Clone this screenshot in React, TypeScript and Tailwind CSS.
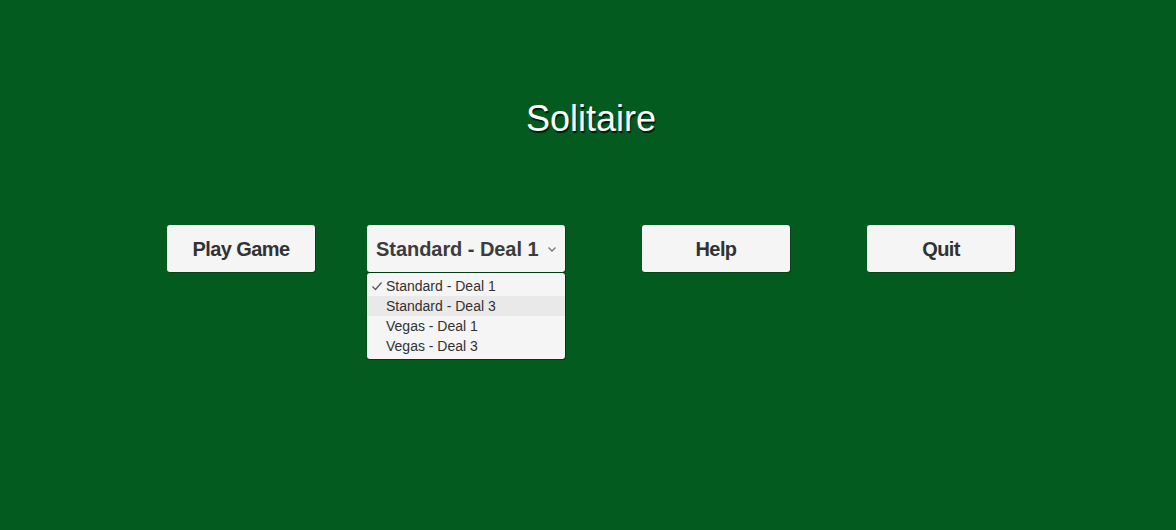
import { useState } from "react";

const modes = ["Standard - Deal 1", "Standard - Deal 3", "Vegas - Deal 1", "Vegas - Deal 3"];

function MenuButton({ label }: { label: string }) {
  return (
    <button className="flex h-[47px] w-[148px] items-center justify-center rounded-[3px] bg-[#f5f5f5] text-[20px] font-bold tracking-[-0.6px] text-[#323232] shadow-[1px_1px_0_rgba(0,0,0,0.25)]">
      {label}
    </button>
  );
}

function ModeDropdown() {
  const [selected] = useState(0);
  const hovered = 1;

  return (
    <div className="relative w-[198px]">
      <button className="flex h-[47px] w-full items-center rounded-[3px] bg-[#f5f5f5] pl-[9px] pr-[8px] text-[20px] font-bold tracking-[-0.05px] text-[#3c3c3c] shadow-[1px_1px_0_rgba(0,0,0,0.25)]">
        <span className="flex-1 text-left">{modes[selected]}</span>
        <svg className="h-[10px] w-[10px]" viewBox="0 0 10 10" fill="none" stroke="#777" strokeWidth={1.3}>
          <path d="M1.5 3.5L5 7l3.5-3.5" />
        </svg>
      </button>

      {/* open list */}
      <div className="absolute left-0 top-[48px] w-full rounded-[3px] bg-[#f5f5f5] pt-[3px] pb-[3px] shadow-[1px_1px_0_rgba(0,0,0,0.3),0_0_0_1px_rgba(0,0,0,0.12)]">
        {modes.map((m, i) => (
          <div
            key={m}
            className={`flex h-[20px] items-center text-[14px] text-[#323232] ${i === hovered ? "bg-[#e9e9e9]" : ""}`}
          >
            <span className="flex w-[19px] justify-center">
              {i === selected && (
                <svg className="h-[12px] w-[12px]" viewBox="0 0 12 12" fill="none" stroke="#555" strokeWidth={1.2}>
                  <path d="M1.5 6.5L4.5 9.5 10.5 2.5" />
                </svg>
              )}
            </span>
            <span>{m}</span>
          </div>
        ))}
      </div>
    </div>
  );
}

export default function App() {
  return (
    <div
      className="h-[530px] w-[1176px] overflow-hidden bg-[#035b1f]"
      style={{ fontFamily: '"Liberation Sans", Arial, sans-serif' }}
    >
      <h1 className="pt-[97px] pl-[6px] text-center text-[36px] leading-[43px] text-white [text-shadow:1px_1.5px_1px_rgba(0,0,0,0.7)]">
        Solitaire
      </h1>

      <div className="mt-[85px] flex items-start pl-[167px]">
        <MenuButton label="Play Game" />
        <div className="ml-[52px]">
          <ModeDropdown />
        </div>
        <div className="ml-[77px]">
          <MenuButton label="Help" />
        </div>
        <div className="ml-[77px]">
          <MenuButton label="Quit" />
        </div>
      </div>
    </div>
  );
}
